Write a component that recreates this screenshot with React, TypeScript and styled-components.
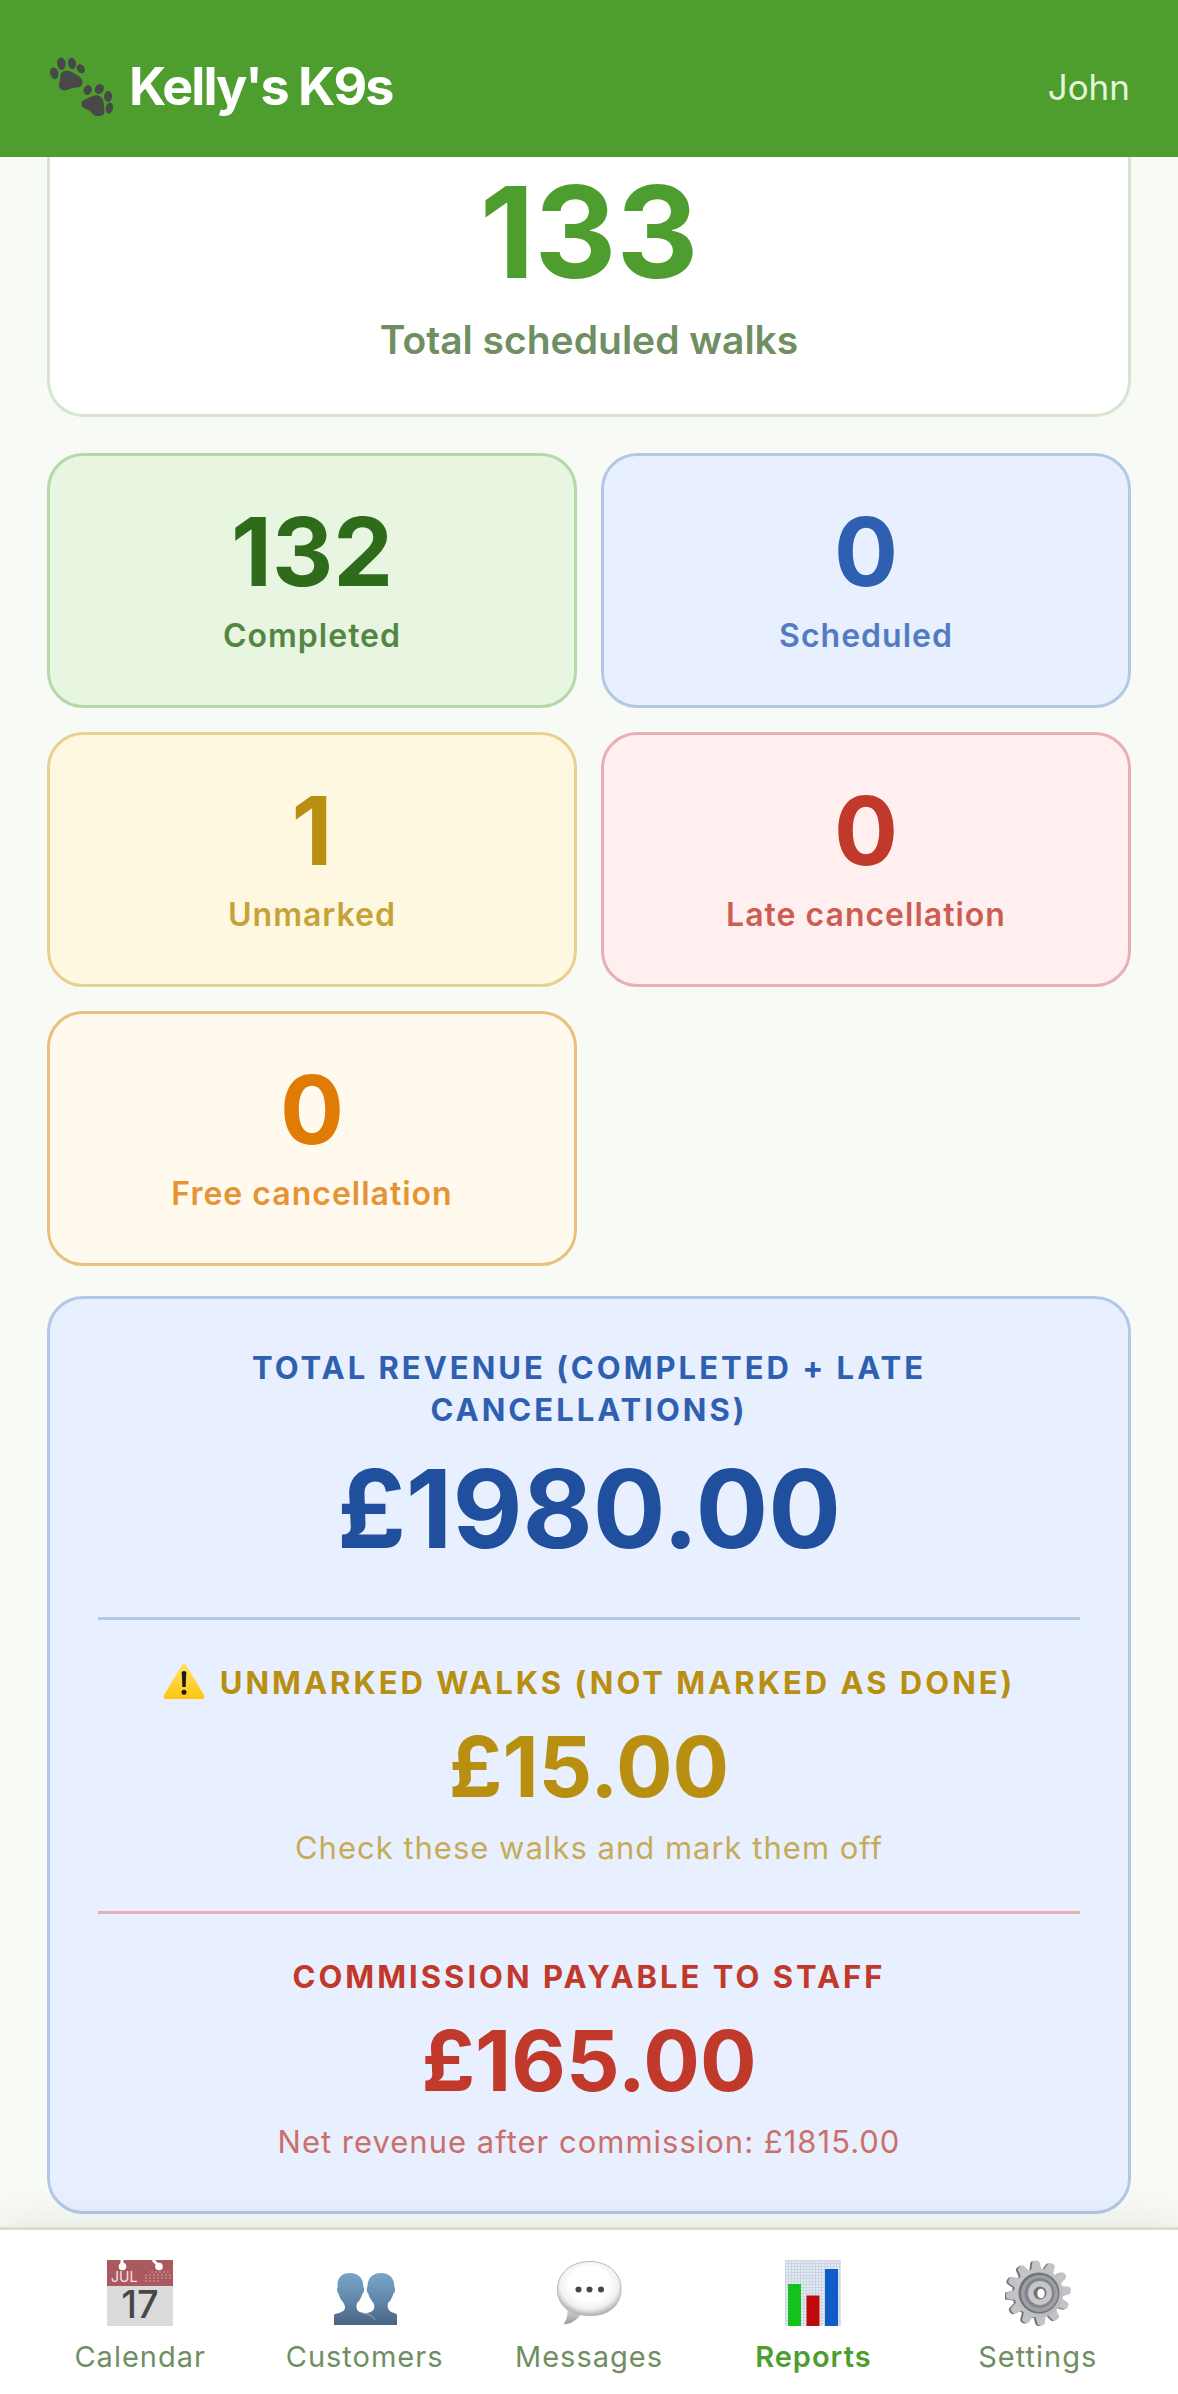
import React from "react";
import styled, { createGlobalStyle, css } from "styled-components";

const GlobalStyle = createGlobalStyle`
  * {
    box-sizing: border-box;
  }
  body {
    margin: 0;
    background: #f8faf5;
    font-family: Inter, "Liberation Sans", sans-serif;
    -webkit-font-smoothing: antialiased;
  }
`;

const Page = styled.div`
  display: flex;
  flex-direction: column;
  min-height: 100vh;
`;

const Header = styled.header`
  position: sticky;
  top: 0;
  z-index: 2;
  display: flex;
  align-items: center;
  justify-content: space-between;
  padding: 57px 48px 40px;
  background: #4d9e2f;
`;

const Brand = styled.h1`
  display: flex;
  align-items: center;
  gap: 15px;
  margin: 0;
  color: #fff;
  font-size: 52px;
  font-weight: 700;
  line-height: 60px;
  letter-spacing: -2px;
`;

const UserName = styled.span`
  color: #e4f5dc;
  font-size: 35px;
  line-height: 48px;
`;

const Main = styled.main`
  flex: 1;
  padding: 0 47px 12px;
`;

const SummaryCard = styled.section`
  display: flex;
  flex-direction: column;
  gap: 22px;
  padding: 13px 48px 50px;
  margin-bottom: 36px;
  text-align: center;
  background: #fff;
  border: 3px solid #d6e5d0;
  border-top: 0;
  border-radius: 0 0 36px 36px;
`;

const SummaryValue = styled.div`
  color: #4d9e2f;
  font-size: 127px;
  font-weight: 700;
  line-height: 124px;
`;

const SummaryLabel = styled.div`
  color: #6f8f62;
  font-size: 39px;
  font-weight: 600;
  line-height: 48px;
`;

type Tone = "green" | "blue" | "yellow" | "red" | "orange";

const tones: Record<Tone, { text: string; fill: string; line: string }> = {
  green: { text: "#2e6b1a", fill: "#e8f5e1", line: "#b5d8a8" },
  blue: { text: "#2f5fb0", fill: "#e8effe", line: "#b2c8e6" },
  yellow: { text: "#b88f10", fill: "#fff8e0", line: "#e8d090" },
  red: { text: "#c0392b", fill: "#fff0ef", line: "#e8b0b4" },
  orange: { text: "#e07b05", fill: "#fff9ee", line: "#eac080" },
};

const StatGrid = styled.section`
  display: grid;
  grid-template-columns: 1fr 1fr;
  gap: 24px;
  margin-bottom: 30px;
`;

const StatCard = styled.div<{ $tone: Tone }>`
  display: flex;
  flex-direction: column;
  gap: 15px;
  padding: 48px 24px;
  text-align: center;
  border-radius: 36px;
  ${({ $tone }) => css`
    color: ${tones[$tone].text};
    background: ${tones[$tone].fill};
    border: 3px solid ${tones[$tone].line};
  `}
`;

const StatValue = styled.div`
  font-size: 95px;
  font-weight: 700;
  line-height: 96px;
`;

const StatLabel = styled.div`
  font-size: 32px;
  font-weight: 600;
  line-height: 42px;
  letter-spacing: 1px;
  opacity: 0.8;
`;

const RevenueCard = styled.section`
  padding: 48px;
  text-align: center;
  background: ${tones.blue.fill};
  border: 3px solid ${tones.blue.line};
  border-radius: 36px;
`;

const RevenueBlock = styled.div<{ $tone: Tone; $divider?: Tone }>`
  color: ${({ $tone }) => tones[$tone].text};
  ${({ $divider }) =>
    $divider &&
    css`
      margin-top: 42px;
      padding-top: 42px;
      border-top: 3px solid ${tones[$divider].line};
    `}
`;

const RevenueTitle = styled.h2`
  margin: 0 0 12px;
  font-size: 31px;
  font-weight: 700;
  line-height: 42px;
  letter-spacing: 3px;
  text-transform: uppercase;

  svg {
    margin-right: 15px;
    vertical-align: -5px;
  }
`;

const RevenueTotal = styled.div`
  color: #204f9e;
  font-size: 108px;
  font-weight: 700;
  line-height: 132px;
`;

const RevenueAmount = styled.div`
  font-size: 84px;
  font-weight: 700;
  line-height: 102px;
`;

const RevenueNote = styled.p`
  margin: 9px 0 0;
  font-size: 31px;
  line-height: 42px;
  letter-spacing: 1px;
  opacity: 0.7;
`;

const TabBar = styled.nav`
  position: sticky;
  bottom: 0;
  z-index: 2;
  display: grid;
  grid-template-columns: repeat(5, 1fr);
  padding: 30px 28px 19px;
  background: #fff;
  border-top: 3px solid #d6e0d0;
  box-shadow: 0 -6px 36px rgba(0, 0, 0, 0.08);
`;

const Tab = styled.a<{ $active?: boolean }>`
  display: flex;
  flex-direction: column;
  align-items: center;
  gap: 13px;
  color: ${({ $active }) => ($active ? "#4d9e2f" : "#6f8f62")};
  font-size: 29px;
  font-weight: ${({ $active }) => ($active ? 600 : 400)};
  line-height: 36px;
  letter-spacing: 1px;
  text-decoration: none;

  svg {
    display: block;
    opacity: ${({ $active }) => ($active ? 1 : 0.8)};
  }
`;

const PawsIcon = () => (
  <svg width="66" height="60" viewBox="0 0 66 60" fill="#484848" aria-hidden="true">
    <ellipse cx="6.2" cy="16.3" rx="4.1" ry="5.8" transform="rotate(-15 6.2 16.3)" />
    <ellipse cx="13.4" cy="6.7" rx="4.2" ry="6.2" transform="rotate(-5 13.4 6.7)" />
    <ellipse cx="24" cy="6.4" rx="4" ry="5.8" transform="rotate(-8 24 6.4)" />
    <ellipse cx="32.8" cy="11.7" rx="3.8" ry="4.8" transform="rotate(-35 32.8 11.7)" />
    <path d="M13 17C14 13.500 20 13 24 15C28 17.500 34 20 34.500 24.500C35 28.500 32 30.500 28 30.500C23 30.500 20 33.500 16.500 33.500C12 33.500 10 29.500 11.500 25C12.300 22 12.200 20 13 17Z" />
    <ellipse cx="39.7" cy="33" rx="4.1" ry="5" transform="rotate(20 39.7 33)" />
    <ellipse cx="51.4" cy="32" rx="4.300" ry="5.200" transform="rotate(30 51.4 32)" />
    <ellipse cx="60.1" cy="39.400" rx="4" ry="5.300" transform="rotate(5 60.1 39.400)" />
    <ellipse cx="61.4" cy="51" rx="3.700" ry="5.500" transform="rotate(10 61.4 51)" />
    <path d="M47 38.500C51 37.500 55 40.500 55.500 44.500C55.500 48 56.500 51 56.500 54.500C56.500 58.500 53 59.500 49 59C44.500 58.500 43.500 54 39 52.500C35 51 33 49 33.300 46C34 42.500 43 40 47 38.500Z" />
  </svg>
);

const WarningIcon = () => (
  <svg width="42" height="36" viewBox="0 0 42 36" aria-hidden="true">
    <defs>
      <linearGradient id="warn" x1="0" y1="0" x2="0" y2="1">
        <stop offset="0" stopColor="#ffe46b" />
        <stop offset="1" stopColor="#fdc60f" />
      </linearGradient>
    </defs>
    <path
      d="M19 1.800q2-3 4 0L41 32q1.600 3.600-2 4H3q-3.600-.4-2-4z"
      fill="url(#warn)"
    />
    <path d="M18.700 9.500q0-1.500 2.300-1.500t2.300 1.500L22.600 24h-3.200z" fill="#1d1a12" />
    <circle cx="21" cy="29.300" r="2.500" fill="#1d1a12" />
  </svg>
);

const CalendarIcon = () => (
  <svg width="66" height="66" viewBox="0 0 66 66" overflow="visible" aria-hidden="true">
    <rect width="66" height="66" fill="#d3d3d3" />
    <rect width="66" height="26" fill="#963238" />
    <path d="M15 0v5M46 0l5 5" stroke="#fff" strokeWidth="3" />
    <circle cx="15.500" cy="6.500" r="3.800" fill="#fff" />
    <circle cx="52" cy="6.500" r="3.800" fill="#fff" />
    <path d="M44 12h20M38 15h26M38 18h26M38 21h16" stroke="#c98d90" strokeDasharray="2 2" />
    <text x="4" y="22" fill="#f0dede" fontSize="14" fontFamily="Inter" letterSpacing="0">
      JUL
    </text>
    <text
      x="33"
      y="58"
      fill="#1b1b1b"
      fontSize="38"
      fontWeight="500"
      textAnchor="middle"
      fontFamily="Inter"
      letterSpacing="0"
    >
      17
    </text>
  </svg>
);

const CustomersIcon = () => (
  <svg width="66" height="66" viewBox="0 0 66 66" aria-hidden="true">
    <defs>
      <linearGradient id="bust" x1="0" y1="13" x2="0" y2="65" gradientUnits="userSpaceOnUse">
        <stop offset="0" stopColor="#5890bb" />
        <stop offset="0.550" stopColor="#396894" />
        <stop offset="1" stopColor="#1d3d63" />
      </linearGradient>
    </defs>
    <path
      d="M49 13c9 0 13.500 6 13.300 14 1.200 1 1.100 5.500-1 7-1.500 4.500-3 7-5.300 9-1 5 .5 8 4 9.200 3 1 4.600 1.400 5 2.300v10.500H33V54c5-1.600 9.500-2.500 9.300-7.500 0-2-.8-3.600-2-5-1.500-2-3-4-4-8-1.800-1.600-2-5.500-.8-6.500C35.300 19 40 13 49 13z"
      fill="url(#bust)"
    />
    <path
      d="M18 13c9 0 13.600 6 13.300 14 1.200 1 1.100 5.500-1 7-1.200 4.500-3 7-5.300 9-1.200 4.600-.2 8 3.500 9.200 6 2 12 1.800 15 7.800v5H2V55c1-2 11-1.800 11-7.500 0-2-.8-3.600-2-5.500-2-2-3.300-4-4.300-8-1.800-1.600-2.200-6-1-7C4.500 19 9 13 18 13z"
      fill="url(#bust)"
    />
    <path d="M29 52.600c6 1.400 11.500 2.400 14 7.400" fill="none" stroke="#7ba0bd" />
  </svg>
);

const MessagesIcon = () => (
  <svg width="66" height="66" viewBox="0 0 66 66" aria-hidden="true">
    <defs>
      <radialGradient id="bubble" cx="0.500" cy="0.420" r="0.580">
        <stop offset="0.550" stopColor="#fff" />
        <stop offset="0.800" stopColor="#ececec" />
        <stop offset="1" stopColor="#9c9c9c" />
      </radialGradient>
      <linearGradient id="tail" x1="0" y1="0" x2="0" y2="1">
        <stop offset="0" stopColor="#d4d4d4" />
        <stop offset="1" stopColor="#858585" />
      </linearGradient>
    </defs>
    <path d="M11 47c1.600 7-.6 13-3.300 17.200 7.300.3 13-4.200 17-9.700z" fill="url(#tail)" />
    <path
      d="M34 1.500C52 1.500 65 13 65 29 65 45 53 55.600 35 55.600 14 55.600 1.500 46 1.500 29.500 1.500 13 15 1.500 34 1.500z"
      fill="url(#bubble)"
      stroke="#a9a9a9"
    />
    <circle cx="22.500" cy="29.500" r="3" fill="#1a1a1a" />
    <circle cx="33.500" cy="29.500" r="3" fill="#1a1a1a" />
    <circle cx="45" cy="29.500" r="3" fill="#1a1a1a" />
  </svg>
);

const ReportsIcon = () => (
  <svg width="56" height="66" viewBox="0 0 56 66" aria-hidden="true">
    <defs>
      <pattern id="paper" width="3" height="3" patternUnits="userSpaceOnUse">
        <rect width="3" height="3" fill="#e2eaf3" />
        <path d="M0 .5h3M.5 0v3" stroke="#ccd6e2" />
      </pattern>
    </defs>
    <rect width="56" height="66" fill="url(#paper)" />
    <rect x="3" y="24" width="13" height="42" fill="#14c21c" />
    <rect x="21.500" y="35.500" width="13" height="30.500" fill="#bf0a0c" />
    <rect x="40" y="9" width="13" height="57" fill="#0f5bc8" />
  </svg>
);

const SettingsIcon = () => {
  const teeth = Array.from({ length: 12 }, (_, i) => i * 30 - 5);
  const tooth = "M-5.500-21l1.800-9.500q.4-2 3.700-2t3.700 2L5.500-21z";
  return (
    <svg width="66" height="66" viewBox="0 0 66 66" aria-hidden="true">
      <defs>
        <linearGradient id="steel" x1="0" y1="0" x2="1" y2="1">
          <stop offset="0" stopColor="#b7bbc1" />
          <stop offset="1" stopColor="#a9a8ac" />
        </linearGradient>
      </defs>
      <g transform="translate(31.500 33.500)" fill="#575250">
        {teeth.map((angle) => (
          <path key={angle} d={tooth} transform={`rotate(${angle})`} />
        ))}
        <circle r="24.500" />
      </g>
      <g transform="translate(33.500 33)" fill="#b2b5ba">
        {teeth.map((angle) => (
          <path key={angle} d={tooth} transform={`rotate(${angle})`} />
        ))}
      </g>
      <circle cx="33.500" cy="33" r="24.500" fill="url(#steel)" />
      <circle cx="34" cy="33" r="20.500" fill="#4f5358" />
      <circle cx="34.500" cy="33.500" r="18.500" fill="#85898e" />
      <circle cx="34.500" cy="33" r="15" fill="#64676c" />
      <circle cx="35" cy="33" r="12" fill="#b9babd" />
      <circle cx="35" cy="33" r="6.500" fill="#57504e" />
      <ellipse cx="36" cy="33.500" rx="3.700" ry="4.800" fill="#fff" />
    </svg>
  );
};

const stats: { value: number; label: string; tone: Tone }[] = [
  { value: 132, label: "Completed", tone: "green" },
  { value: 0, label: "Scheduled", tone: "blue" },
  { value: 1, label: "Unmarked", tone: "yellow" },
  { value: 0, label: "Late cancellation", tone: "red" },
  { value: 0, label: "Free cancellation", tone: "orange" },
];

const tabs = [
  { label: "Calendar", Icon: CalendarIcon },
  { label: "Customers", Icon: CustomersIcon },
  { label: "Messages", Icon: MessagesIcon },
  { label: "Reports", Icon: ReportsIcon, active: true },
  { label: "Settings", Icon: SettingsIcon },
];

const App = () => {
  return (
    <Page>
      <GlobalStyle />
      <Header>
        <Brand>
          <PawsIcon />
          Kelly's K9s
        </Brand>
        <UserName>John</UserName>
      </Header>

      <Main>
        <SummaryCard>
          <SummaryValue>133</SummaryValue>
          <SummaryLabel>Total scheduled walks</SummaryLabel>
        </SummaryCard>

        <StatGrid>
          {stats.map(({ value, label, tone }) => (
            <StatCard key={label} $tone={tone}>
              <StatValue>{value}</StatValue>
              <StatLabel>{label}</StatLabel>
            </StatCard>
          ))}
        </StatGrid>

        <RevenueCard>
          <RevenueBlock $tone="blue">
            <RevenueTitle>Total revenue (completed + late cancellations)</RevenueTitle>
            <RevenueTotal>£1980.00</RevenueTotal>
          </RevenueBlock>
          <RevenueBlock $tone="yellow" $divider="blue">
            <RevenueTitle>
              <WarningIcon />
              Unmarked walks (not marked as done)
            </RevenueTitle>
            <RevenueAmount>£15.00</RevenueAmount>
            <RevenueNote>Check these walks and mark them off</RevenueNote>
          </RevenueBlock>
          <RevenueBlock $tone="red" $divider="red">
            <RevenueTitle>Commission payable to staff</RevenueTitle>
            <RevenueAmount>£165.00</RevenueAmount>
            <RevenueNote>Net revenue after commission: £1815.00</RevenueNote>
          </RevenueBlock>
        </RevenueCard>
      </Main>

      <TabBar>
        {tabs.map(({ label, Icon, active }) => (
          <Tab key={label} href={`#${label.toLowerCase()}`} $active={active} aria-current={active ? "page" : undefined}>
            <Icon />
            {label}
          </Tab>
        ))}
      </TabBar>
    </Page>
  );
};

export default App;
